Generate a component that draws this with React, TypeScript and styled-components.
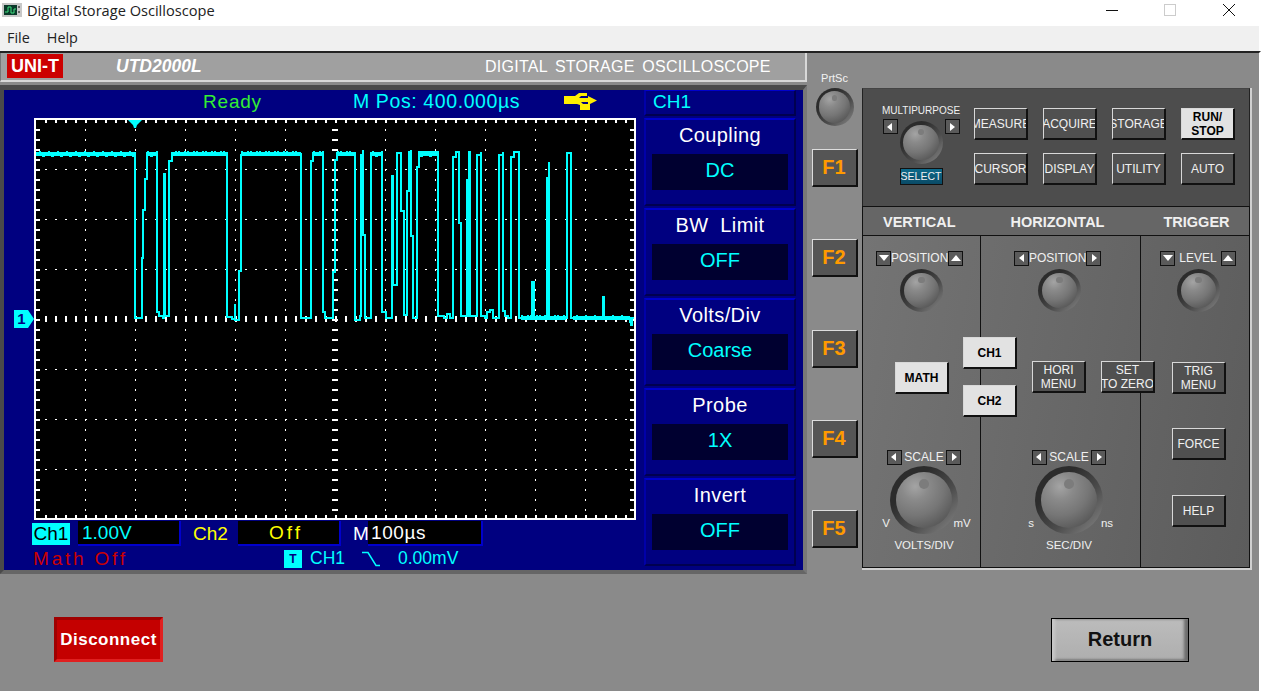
import React from 'react';
import styled, { createGlobalStyle } from 'styled-components';

const GlobalStyle = createGlobalStyle`
  html, body {
    margin: 0;
    padding: 0;
    background: #8a8a8a;
  }
  * {
    box-sizing: border-box;
  }
`;

const lcdFont = `"Liberation Sans", Arial, sans-serif`;

// points read off the reference, in page coordinates
const TRACE: [number, number][] = [
  [36, 153], [135, 153], [135, 318], [141, 318], [142, 258], [143, 210], [145, 179], [147, 153], [157, 153],
  [157, 312], [159, 316], [163, 318], [164, 174], [165, 316], [168, 316], [169, 161], [172, 153], [227, 153],
  [227, 317], [232, 319], [235, 304], [235, 320], [239, 320], [239, 271], [241, 271], [241, 155], [301, 153],
  [301, 318], [310, 318], [311, 161], [313, 153], [323, 153], [323, 312], [325, 318], [333, 318], [333, 272],
  [335, 160], [337, 153], [355, 153], [355, 320], [358, 320], [360, 316], [361, 155], [363, 150], [363, 235],
  [365, 235], [365, 318], [370, 318], [371, 311], [371, 153], [382, 153], [382, 312], [386, 318], [392, 316],
  [392, 176], [393, 285], [397, 285], [397, 153], [401, 153], [401, 211], [403, 211], [404, 315], [407, 315],
  [407, 191], [409, 191], [409, 152], [411, 150], [411, 236], [413, 236], [413, 318], [417, 318], [417, 167],
  [419, 167], [419, 152], [438, 153], [438, 316], [444, 318], [447, 314], [450, 318], [453, 318], [453, 157],
  [456, 152], [459, 152], [459, 223], [461, 223], [461, 316], [466, 316], [467, 180], [468, 316], [469, 152],
  [470, 316], [476, 316], [477, 155], [481, 152], [481, 316], [485, 318], [487, 312], [490, 310], [493, 318],
  [499, 316], [499, 155], [503, 152], [503, 311], [505, 316], [508, 318], [511, 316], [511, 157], [514, 152],
  [519, 153], [519, 318], [530, 318], [532, 314], [532, 282], [534, 290], [534, 318], [545, 316], [547, 316],
  [547, 178], [549, 162], [549, 318], [567, 316], [567, 153], [571, 152], [571, 318], [602, 318], [603, 297],
  [604, 318], [628, 318], [630, 322], [631, 325], [632, 318], [634, 318],
];

// [from x, to x, y of the band] where the trace sits thick and noisy
const BANDS: [number, number, number][] = [
  [36, 135, 152],
  [147, 157, 152],
  [172, 227, 152],
  [241, 301, 152],
  [313, 323, 152],
  [337, 355, 152],
  [372, 382, 152],
  [420, 438, 152],
  [573, 630, 316],
  [521, 566, 316],
];

const buildTrace = () =>
  TRACE.reduce((d, [x, y], i) => (i === 0 ? `M${x} ${y}` : `${d}H${x}V${y}`), '');

const buildNoise = () => {
  let d = '';
  BANDS.forEach(([from, to, y]) => {
    d += `M${from} ${y}H${to}v4H${from}z`;
    for (let x = from; x < to; x += 3) {
      const n = (x * 7 + y) % 9;
      if (n < 4) d += `M${x} ${y - 1}h2v2h-2z`;
      if (n === 5) d += `M${x} ${y + 3}h3v2h-3z`;
    }
  });
  return d;
};

const buildGrid = () => {
  let d = '';
  const rect = (x: number, y: number, w: number, h: number) => {
    d += `M${x} ${y}h${w}v${h}h${-w}z`;
  };
  for (let x = 45; x < 634; x += 10) {
    rect(x, 120, 1.5, 3);
    rect(x, 515, 1.5, 3);
    rect(x, 316, 1.5, 6);
  }
  for (let y = 129; y < 518; y += 10) {
    rect(36, y, 4, 1.5);
    rect(630, y, 4, 1.5);
    rect(332, y, 6, 1.5);
  }
  for (let x = 85; x < 634; x += 50) {
    if (x === 335) continue;
    for (let y = 129; y < 518; y += 10) rect(x - 0.5, y, 1.5, 1.5);
  }
  for (let y = 169; y < 518; y += 50) {
    if (y === 319) continue;
    for (let x = 45; x < 634; x += 10) rect(x, y - 0.5, 1.5, 1.5);
  }
  return d;
};

const Page = styled.div`
  width: 1261px;
  height: 691px;
  display: flex;
  flex-direction: column;
  overflow: hidden;
  font-family: "Liberation Sans", Arial, sans-serif;
  background: #8a8a8a;
`;

const TitleBar = styled.div`
  height: 26px;
  flex: none;
  display: flex;
  align-items: center;
  padding: 0 0 6px 2px;
  background: #fff;
  color: #222;
  font-family: "Open Sans", sans-serif;
  font-size: 14.6px;
`;

const TitleText = styled.span`
  margin-left: 5px;
  flex: 1;
`;

const WindowIcon = styled.svg`
  display: block;
  flex: none;
  margin-right: ${(p) => p.$right}px;
`;

const MenuBar = styled.div`
  height: 25px;
  flex: none;
  display: flex;
  align-items: center;
  gap: 17px;
  padding: 0 0 2px 7px;
  background: #f0f0f0;
  border-right: 2px solid #fff;
  color: #222;
  font-family: "Open Sans", sans-serif;
  font-size: 14.4px;
`;

const Workspace = styled.div`
  flex: 1;
  display: flex;
  flex-direction: column;
  border-top: 2px solid #222;
  border-right: 2px solid #fff;
  background: #8a8a8a;
`;

const TopArea = styled.div`
  display: flex;
  align-items: flex-start;
`;

const LeftPane = styled.div`
  width: 807px;
  flex: none;
`;

const HeaderStrip = styled.div`
  height: 29px;
  display: flex;
  align-items: flex-start;
  background: #a0a0a0;
  border-bottom: 2px solid #d8d8d8;
  border-right: 2px solid #d8d8d8;
  border-left: 1px solid #777;
  color: #fff;
`;

const Brand = styled.div`
  width: 56px;
  height: 24px;
  margin: 1px 0 0 6px;
  background: #cc0000;
  font-size: 18px;
  font-weight: 700;
  line-height: 24px;
  text-align: center;
`;

const ModelName = styled.div`
  width: 369px;
  margin-left: 53px;
  font-size: 17.5px;
  font-weight: 700;
  font-style: italic;
  line-height: 27px;
`;

const ProductName = styled.div`
  font-size: 16px;
  line-height: 27px;
  letter-spacing: 0.25px;
  word-spacing: 3px;
`;

const ScopePanel = styled.div`
  height: 489px;
  margin-top: 3px;
  display: flex;
  padding-right: 7px;
  background: #000080;
  border-top: 5px solid #4a4a4a;
  border-left: 4px solid #4a4a4a;
  border-right: 4px solid #777;
  border-bottom: 4px solid #666;
`;

const ScopeMain = styled.div`
  width: 640px;
  flex: none;
`;

const ScopeTop = styled.div`
  height: 28px;
  display: flex;
  align-items: center;
  padding-bottom: 5px;
  font-family: ${lcdFont};
  font-size: 20px;
`;

const ReadyText = styled.span`
  margin-left: 199px;
  width: 150px;
  color: #33ee33;
  font-size: 19px;
  letter-spacing: 0.8px;
`;

const PosText = styled.span`
  width: 211px;
  color: #00ffff;
  font-size: 19.5px;
  letter-spacing: 0.6px;
`;

const ScreenWrap = styled.div`
  position: relative;
  width: 602px;
  height: 402px;
  margin-left: 30px;
  border: 2px solid #fff;
  background: #000;
`;

const Plot = styled.svg`
  display: block;
`;

const GroundMark = styled.div`
  position: absolute;
  left: -22px;
  top: 190px;
  width: 20px;
  height: 18px;
  padding-right: 5px;
  background: #00ffff;
  clip-path: polygon(0 0, 70% 0, 100% 50%, 70% 100%, 0 100%);
  color: #000080;
  font-size: 15px;
  font-weight: 700;
  line-height: 18px;
  text-align: center;
`;

const StatusRow = styled.div`
  height: ${(p) => p.$height}px;
  display: flex;
  align-items: center;
  padding-left: 28px;
  font-family: ${lcdFont};
  font-size: 19px;
`;

const ChannelChip = styled.span`
  width: 38px;
  height: 22px;
  margin-right: 8px;
  background: #00ffff;
  color: #000;
  line-height: 22px;
  text-align: center;
`;

const ReadoutBox = styled.span`
  width: ${(p) => p.$width}px;
  height: 25px;
  flex: none;
  padding-left: ${(p) => p.$pad}px;
  background: #000;
  border-right: 2px solid #0000cc;
  border-bottom: 2px solid #0000cc;
  color: ${(p) => p.$color};
  letter-spacing: ${(p) => p.$spacing || 0}px;
  line-height: 23px;
`;

const ReadoutLabel = styled.span`
  width: ${(p) => p.$width}px;
  margin-left: ${(p) => p.$left}px;
  flex: none;
  color: ${(p) => p.$color};
`;

const TriggerChip = styled.span`
  width: 18px;
  height: 18px;
  margin: 0 8px 0 222px;
  background: #00ffff;
  color: #000080;
  font-size: 12px;
  font-weight: 700;
  line-height: 18px;
  text-align: center;
`;

const MathText = styled.span`
  width: 29px;
  margin-left: 1px;
  flex: none;
  color: #cc0000;
  letter-spacing: 2.8px;
  white-space: nowrap;
`;

const TriggerValue = styled.span`
  color: #00ffff;
  font-size: 17.5px;
  margin-left: ${(p) => p.$left}px;
`;

const EdgeIcon = styled.svg`
  margin-left: ${(p) => p.$left}px;
  flex: none;
`;

const SoftMenu = styled.div`
  width: 152px;
  flex: none;
  font-family: ${lcdFont};
`;

const SoftHeader = styled.div`
  height: 26px;
  margin-bottom: 2px;
  padding-left: 7px;
  border-top: 1px solid #0000cc;
  border-left: 2px solid #0000a8;
  border-right: 2px solid #000050;
  border-bottom: 2px solid #000050;
  color: #00ffff;
  font-size: 19px;
  line-height: 22px;
`;

const SoftItem = styled.div`
  height: 88px;
  margin-bottom: 2px;
  display: flex;
  flex-direction: column;
  align-items: center;
  border-top: 2px solid #0000cc;
  border-left: 2px solid #0000a8;
  border-right: 2px solid #000050;
  border-bottom: 2px solid #000050;
`;

const SoftTitle = styled.div`
  height: 34px;
  color: #fff;
  font-size: 20px;
  letter-spacing: 0.4px;
  line-height: 30px;
  white-space: pre;
`;

const SoftValue = styled.div`
  width: 136px;
  height: 36px;
  background: #000030;
  color: #00ffff;
  font-size: 20px;
  line-height: 33px;
  text-align: center;
`;

const FunctionColumn = styled.div`
  width: 55px;
  flex: none;
  display: flex;
  flex-direction: column;
  align-items: center;
`;

const PrtScLabel = styled.div`
  margin-top: 19px;
  color: #f2f2f2;
  font-size: 11px;
  line-height: 13px;
`;

const KnobRing = styled.div`
  width: ${(p) => p.$size}px;
  height: ${(p) => p.$size}px;
  flex: none;
  display: flex;
  align-items: center;
  justify-content: center;
  margin-left: ${(p) => p.$left || 0}px;
  margin-top: ${(p) => p.$top || 0}px;
  border-radius: 50%;
  background: linear-gradient(135deg, #2c2c2c 30%, #4c4c4c 62%, #8a8a8a 100%);
`;

const KnobCap = styled.div`
  position: relative;
  width: 83%;
  height: 83%;
  border-radius: 50%;
  background: radial-gradient(circle at 34% 26%, #a4a4a4 0%, #8a8a8a 24%, #767676 52%, #545454 85%, #4a4a4a 100%);
  &::after {
    content: '';
    position: absolute;
    left: 41%;
    top: 12%;
    width: 18%;
    height: 18%;
    border-radius: 50%;
    background: #7c7c7c;
  }
`;

const FunctionKey = styled.button`
  width: 46px;
  height: 38px;
  margin-top: ${(p) => p.$top}px;
  padding: 0;
  background: #555;
  border-style: solid;
  border-width: 1px 2px 2px 1px;
  border-color: #ddd #111 #111 #ddd;
  color: #ff9a00;
  font-family: "Liberation Sans", sans-serif;
  font-size: 20px;
  font-weight: 700;
`;

const ControlPanel = styled.div`
  width: 390px;
  height: 482px;
  margin-top: 35px;
  flex: none;
  display: flex;
  flex-direction: column;
  border-right: 2px solid #d0d0d0;
  border-bottom: 2px solid #d0d0d0;
  background: #4d4d4d;
  color: #f0f0f0;
`;

const TopControls = styled.div`
  height: 118px;
  flex: none;
  display: flex;
  padding-top: 14px;
  border-top: 1px solid #444;
  border-left: 1px solid #222;
  border-right: 1px solid #222;
`;

const MultiGroup = styled.div`
  width: 111px;
  flex: none;
  display: flex;
  flex-direction: column;
  align-items: center;
  padding-left: 5px;
`;

const SmallLabel = styled.div`
  font-size: 10px;
  line-height: 16px;
`;

const MultiRow = styled.div`
  display: flex;
  align-items: flex-start;
  gap: 2px;
`;

const SelectButton = styled.div`
  width: 43px;
  height: 17px;
  margin-top: 4px;
  background: linear-gradient(#0d6a8a, #0a4a66);
  border: 1px solid #111;
  font-size: 10.5px;
  line-height: 15px;
  text-align: center;
`;

const ButtonGrid = styled.div`
  display: grid;
  grid-template-columns: repeat(4, 54px);
  grid-auto-rows: 32px;
  column-gap: 15px;
  row-gap: 13px;
  margin-top: 5px;
`;

const PanelButton = styled.button`
  width: 54px;
  height: 32px;
  flex: none;
  position: relative;
  z-index: 1;
  margin-top: ${(p) => p.$top || 0}px;
  margin-left: ${(p) => p.$left || 0}px;
  padding: 0;
  overflow: hidden;
  display: flex;
  align-items: center;
  justify-content: center;
  text-align: center;
  white-space: pre;
  background: ${(p) => (p.$light ? '#e2e2e2' : '#505050')};
  border-style: solid;
  border-width: 1px 2px 2px 1px;
  border-color: #d8d8d8 #111 #111 #d8d8d8;
  color: ${(p) => (p.$light ? '#000' : '#f0f0f0')};
  font-family: "Liberation Sans", sans-serif;
  font-size: 12px;
  font-weight: ${(p) => (p.$light ? 700 : 400)};
  line-height: 14px;
`;

const SectionHeads = styled.div`
  height: 30px;
  flex: none;
  display: flex;
  align-items: center;
  padding-top: 2px;
  background: #666;
  border: 1px solid #111;
  font-size: 14.5px;
  font-weight: 700;
`;

const SectionHead = styled.span`
  margin-left: ${(p) => p.$left}px;
`;

const Sections = styled.div`
  flex: 1;
  display: flex;
  background: linear-gradient(100deg, #747474, #5c5c5c);
  border-left: 1px solid #111;
  border-right: 1px solid #111;
  border-bottom: 1px solid #111;
`;

const SectionColumn = styled.div`
  width: ${(p) => p.$width}px;
  flex: none;
  display: flex;
  flex-direction: column;
  align-items: flex-start;
  padding-top: 15px;
  border-right: ${(p) => (p.$last ? 'none' : '1px solid #111')};
`;

const ArrowRow = styled.div`
  width: ${(p) => p.$width}px;
  height: 14px;
  margin-left: ${(p) => p.$left}px;
  flex: none;
  display: flex;
  align-items: center;
  justify-content: space-between;
  font-size: 12px;
`;

const ArrowButton = styled.span`
  width: 15px;
  height: 15px;
  flex: none;
  display: flex;
  align-items: center;
  justify-content: center;
  background: #5a5a5a;
  border: 1px solid #111;
`;

const MiddleRow = styled.div`
  display: flex;
  align-items: center;
  gap: 15px;
  margin-top: ${(p) => p.$top}px;
  margin-left: ${(p) => p.$left}px;
`;

const ChannelStack = styled.div`
  display: flex;
  flex-direction: column;
  gap: 16px;
`;

const ScaleBlock = styled.div`
  width: 118px;
  margin-top: ${(p) => p.$top}px;
  margin-left: ${(p) => p.$left}px;
  display: flex;
  flex-direction: column;
  align-items: center;
`;

const ScaleKnobRow = styled.div`
  display: flex;
  align-items: flex-end;
  justify-content: center;
  margin-top: 2px;
  font-size: 11.5px;
`;

const UnitLabel = styled.span`
  width: 24px;
  margin: 0 -8px 5px;
  position: relative;
  text-align: center;
`;

const ScaleCaption = styled.div`
  margin-top: 4px;
  font-size: 11.5px;
  line-height: 14px;
`;

const BottomBar = styled.div`
  display: flex;
  align-items: flex-start;
  justify-content: space-between;
  padding: 43px 70px 0 54px;
`;

const DisconnectButton = styled.button`
  width: 109px;
  height: 45px;
  padding: 0;
  background: #c40000;
  border-style: solid;
  border-width: 3px;
  border-color: #a00000 #e02020 #e02020 #a00000;
  color: #fff;
  font-family: "Liberation Sans", sans-serif;
  font-size: 17px;
  font-weight: 700;
  letter-spacing: 0.5px;
`;

const ReturnButton = styled.button`
  width: 138px;
  height: 44px;
  margin-top: 1px;
  padding: 0 0 2px;
  background: linear-gradient(#bcbcbc, #aeaeae);
  border: 1px solid #000;
  box-shadow: inset 4px 0 3px -1px #c8c8c8, inset -5px 0 3px -1px #6c6c6c, inset 0 -3px 2px -1px #7c7c7c,
    inset 0 2px 2px -1px #999;
  color: #111;
  font-family: "Liberation Sans", sans-serif;
  font-size: 20px;
  font-weight: 700;
`;

const Arrow = ({ dir }: { dir: 'left' | 'right' | 'up' | 'down' }) => {
  const points = {
    left: '7,1 7,9 2,5',
    right: '3,1 3,9 8,5',
    up: '5,2 10,8 0,8',
    down: '0,2 10,2 5,8',
  };
  return (
    <svg width="10" height="10" viewBox="0 0 10 10">
      <polygon points={points[dir]} fill="#fff" />
    </svg>
  );
};

const Knob = ({ size, left, top }: { size: number; left?: number; top?: number }) => (
  <KnobRing $size={size} $left={left} $top={top}>
    <KnobCap />
  </KnobRing>
);

const softItems = [
  { title: 'Coupling', value: 'DC' },
  { title: 'BW  Limit', value: 'OFF' },
  { title: 'Volts/Div', value: 'Coarse' },
  { title: 'Probe', value: '1X' },
  { title: 'Invert', value: 'OFF' },
];

const topButtons = ['MEASURE', 'ACQUIRE', 'STORAGE', 'RUN/\nSTOP', 'CURSOR', 'DISPLAY', 'UTILITY', 'AUTO'];

const UsbIcon = () => (
  <svg width="33" height="18" viewBox="0 0 33 18">
    <path
      d="M0 3h11l4-3h8v3h-6l-2 2h9V3l9 4.500-9 4.500V9H17l2 2h7v6H16v-5l-3-1H0z"
      fill="#ffee00"
    />
  </svg>
);

const App = () => {
  const grid = buildGrid();
  const noise = buildNoise();
  const trace = buildTrace();
  return (
    <Page>
      <GlobalStyle />
      <TitleBar>
        <svg width="20" height="16" viewBox="0 0 20 16">
          <rect x="0" y="1" width="20" height="14" fill="#c8c8c8" />
          <rect x="2" y="3" width="13" height="10" fill="#0a3a2a" />
          <path d="M3 10h3V5h3v6h3V7h2" fill="none" stroke="#40e080" strokeWidth="1" />
          <rect x="16" y="4" width="2" height="2" fill="#666" />
          <rect x="16" y="9" width="2" height="2" fill="#666" />
        </svg>
        <TitleText>Digital Storage Oscilloscope</TitleText>
        <WindowIcon $right={46} width="12" height="12" viewBox="0 0 12 12">
          <path d="M0 6.500h12" stroke="#111" strokeWidth="1" />
        </WindowIcon>
        <WindowIcon $right={47} width="12" height="12" viewBox="0 0 12 12">
          <rect x="0.500" y="0.500" width="11" height="11" fill="none" stroke="#ccc" />
        </WindowIcon>
        <WindowIcon $right={26} width="12" height="12" viewBox="0 0 12 12">
          <path d="M0 0l12 12M12 0L0 12" stroke="#111" strokeWidth="1" />
        </WindowIcon>
      </TitleBar>
      <MenuBar>
        <span>File</span>
        <span>Help</span>
      </MenuBar>
      <Workspace>
        <TopArea>
          <LeftPane>
            <HeaderStrip>
              <Brand>UNI-T</Brand>
              <ModelName>UTD2000L</ModelName>
              <ProductName>DIGITAL STORAGE OSCILLOSCOPE</ProductName>
            </HeaderStrip>
            <ScopePanel>
              <ScopeMain>
                <ScopeTop>
                  <ReadyText>Ready</ReadyText>
                  <PosText>M Pos: 400.000µs</PosText>
                  <UsbIcon />
                </ScopeTop>
                <ScreenWrap>
                  <Plot width="598" height="398" viewBox="36 120 598 398">
                    <path d={grid} fill="#fff" shapeRendering="crispEdges" />
                    <polygon points="128,120 142,120 137,125 136,128 134,128 133,125" fill="#00ffff" />
                    <path d={noise} fill="#00ffff" shapeRendering="crispEdges" />
                    <path d={trace} fill="none" stroke="#00ffff" strokeWidth="2.500" shapeRendering="crispEdges" />
                  </Plot>
                  <GroundMark>1</GroundMark>
                </ScreenWrap>
                <StatusRow $height={27}>
                  <ChannelChip>Ch1</ChannelChip>
                  <ReadoutBox $width={103} $pad={4} $color="#00ffff">1.00V</ReadoutBox>
                  <ReadoutLabel $width={45} $left={12} $color="#ffff00">Ch2</ReadoutLabel>
                  <ReadoutBox $width={103} $pad={31} $spacing={3} $color="#ffff00">Off</ReadoutBox>
                  <ReadoutLabel $width={15} $left={12} $color="#fff">M</ReadoutLabel>
                  <ReadoutBox $width={115} $pad={3} $spacing={0.6} $color="#fff">100µs</ReadoutBox>
                </StatusRow>
                <StatusRow $height={23}>
                  <MathText>Math Off</MathText>
                  <TriggerChip>T</TriggerChip>
                  <TriggerValue $left={0}>CH1</TriggerValue>
                  <EdgeIcon $left={17} width="18" height="16" viewBox="0 0 18 16">
                    <path d="M0 1.500h6L14 14.500h4" fill="none" stroke="#00ffff" strokeWidth="1.500" />
                  </EdgeIcon>
                  <TriggerValue $left={18}>0.00mV</TriggerValue>
                </StatusRow>
              </ScopeMain>
              <SoftMenu>
                <SoftHeader>CH1</SoftHeader>
                {softItems.map((item) => (
                  <SoftItem key={item.title}>
                    <SoftTitle>{item.title}</SoftTitle>
                    <SoftValue>{item.value}</SoftValue>
                  </SoftItem>
                ))}
              </SoftMenu>
            </ScopePanel>
          </LeftPane>
          <FunctionColumn>
            <PrtScLabel>PrtSc</PrtScLabel>
            <Knob size={38} top={3} />
            <FunctionKey $top={23}>F1</FunctionKey>
            <FunctionKey $top={52}>F2</FunctionKey>
            <FunctionKey $top={53}>F3</FunctionKey>
            <FunctionKey $top={52}>F4</FunctionKey>
            <FunctionKey $top={52}>F5</FunctionKey>
          </FunctionColumn>
          <ControlPanel>
            <TopControls>
              <MultiGroup>
                <SmallLabel>MULTIPURPOSE</SmallLabel>
                <MultiRow>
                  <ArrowButton><Arrow dir="left" /></ArrowButton>
                  <Knob size={43} top={2} />
                  <ArrowButton><Arrow dir="right" /></ArrowButton>
                </MultiRow>
                <SelectButton>SELECT</SelectButton>
              </MultiGroup>
              <ButtonGrid>
                {topButtons.map((label) => (
                  <PanelButton key={label} $light={label.startsWith('RUN')}>{label}</PanelButton>
                ))}
              </ButtonGrid>
            </TopControls>
            <SectionHeads>
              <SectionHead $left={20}>VERTICAL</SectionHead>
              <SectionHead $left={55}>HORIZONTAL</SectionHead>
              <SectionHead $left={59}>TRIGGER</SectionHead>
            </SectionHeads>
            <Sections>
              <SectionColumn $width={118}>
                <ArrowRow $width={87} $left={13}>
                  <ArrowButton><Arrow dir="down" /></ArrowButton>
                  POSITION
                  <ArrowButton><Arrow dir="up" /></ArrowButton>
                </ArrowRow>
                <Knob size={43} left={37} top={4} />
                <MiddleRow $top={50} $left={32}>
                  <PanelButton $light>MATH</PanelButton>
                </MiddleRow>
                <ScaleBlock $top={56} $left={2}>
                  <ArrowRow $width={75} $left={0}>
                    <ArrowButton><Arrow dir="left" /></ArrowButton>
                    SCALE
                    <ArrowButton><Arrow dir="right" /></ArrowButton>
                  </ArrowRow>
                  <ScaleKnobRow>
                    <UnitLabel>V</UnitLabel>
                    <Knob size={68} />
                    <UnitLabel>mV</UnitLabel>
                  </ScaleKnobRow>
                  <ScaleCaption>VOLTS/DIV</ScaleCaption>
                </ScaleBlock>
              </SectionColumn>
              <SectionColumn $width={160}>
                <ArrowRow $width={87} $left={33}>
                  <ArrowButton><Arrow dir="left" /></ArrowButton>
                  POSITION
                  <ArrowButton><Arrow dir="right" /></ArrowButton>
                </ArrowRow>
                <Knob size={43} left={57} top={4} />
                <MiddleRow $top={25} $left={-18}>
                  <ChannelStack>
                    <PanelButton $light>CH1</PanelButton>
                    <PanelButton $light>CH2</PanelButton>
                  </ChannelStack>
                  <PanelButton>{'HORI\nMENU'}</PanelButton>
                  <PanelButton>{'SET\nTO ZERO'}</PanelButton>
                </MiddleRow>
                <ScaleBlock $top={33} $left={29}>
                  <ArrowRow $width={75} $left={0}>
                    <ArrowButton><Arrow dir="left" /></ArrowButton>
                    SCALE
                    <ArrowButton><Arrow dir="right" /></ArrowButton>
                  </ArrowRow>
                  <ScaleKnobRow>
                    <UnitLabel>s</UnitLabel>
                    <Knob size={68} />
                    <UnitLabel>ns</UnitLabel>
                  </ScaleKnobRow>
                  <ScaleCaption>SEC/DIV</ScaleCaption>
                </ScaleBlock>
              </SectionColumn>
              <SectionColumn $width={109} $last>
                <ArrowRow $width={76} $left={19}>
                  <ArrowButton><Arrow dir="down" /></ArrowButton>
                  LEVEL
                  <ArrowButton><Arrow dir="up" /></ArrowButton>
                </ArrowRow>
                <Knob size={43} left={36} top={4} />
                <PanelButton $top={50} $left={31}>{'TRIG\nMENU'}</PanelButton>
                <PanelButton $top={34} $left={31}>FORCE</PanelButton>
                <PanelButton $top={35} $left={31}>HELP</PanelButton>
              </SectionColumn>
            </Sections>
          </ControlPanel>
        </TopArea>
        <BottomBar>
          <DisconnectButton>Disconnect</DisconnectButton>
          <ReturnButton>Return</ReturnButton>
        </BottomBar>
      </Workspace>
    </Page>
  );
};

export default App;
